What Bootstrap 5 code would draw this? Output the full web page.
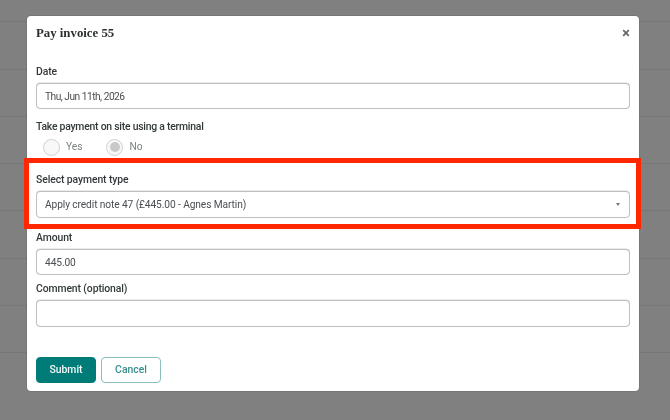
<!DOCTYPE html>
<html lang="en">
<head>
    <meta charset="UTF-8">
    <title>Pay invoice</title>
    <link href="https://cdn.jsdelivr.net/npm/bootstrap@5.3.3/dist/css/bootstrap.min.css" rel="stylesheet">
    <style>
        html, body { height: 100%; overflow: hidden; }
        body { background: #808080; font-family: Roboto, "Liberation Sans", sans-serif; font-size: 10.2px; color: #33393b; }
        .bg-rows { height: 420px; overflow: hidden; margin-top: -25px; }
        .bg-row { height: 47.3px; border-bottom: 1px solid #777; }

        .pay-modal { --bs-modal-width: 612px; width: 612px; max-width: 612px; margin: 16px 0 0 27px; }
        .pay-modal .modal-content { border: 0; border-radius: 4px; height: 375px; display: block; padding: 0 9px; color: #33393b; box-shadow: 0 0 0 1px rgba(0,0,0,.08); }
        .pay-modal .modal-header { border: 0; padding: 9px 0 0; height: 34px; align-items: flex-start; }
        .pay-modal .modal-title { font-family: "Liberation Serif", serif; font-size: 12.8px; font-weight: 700; line-height: 16px; color: #2b2f31; }
        .close-x { border: 0; background: none; padding: 0; width: 8px; height: 8px; margin: 4px 0 0 auto; line-height: 0; }

        .pay-modal .modal-body { padding: 0; }
        .form-label { font-size: 10.4px; font-weight: 500; letter-spacing: -.1px; line-height: 14px; margin-bottom: 4px; display: block; color: #33393b; }
        .form-control, .form-select { font-size: 10.2px; letter-spacing: -.1px; line-height: 14px; height: 26px; padding: 0 8px; border: 1px solid #bfbfbf; border-radius: 4px; color: #4a4f52; box-shadow: 0 -.5px 0 #d8d8d8; }
        #payDate { letter-spacing: -.5px; }
        .form-select { background-image: none; }
        textarea.form-control { height: 27px; min-height: 27px; resize: none; }
        .select-wrap { position: relative; }
        .caret { position: absolute; right: 10px; top: 12px; width: 0; height: 0; border-left: 2.5px solid transparent; border-right: 2.5px solid transparent; border-top: 3px solid #777; }

        .field-date { padding-top: 15px; }
        .field-terminal { padding-top: 11px; }
        .field-terminal .form-label { letter-spacing: -.23px; }
        .radio-row { padding-left: 7px; gap: 24px; height: 18px; }
        .radio-item { gap: 6px; color: #7d8183; }
        .radio { width: 17px; height: 17px; border-radius: 50%; border: 1.5px solid #d0d0d0; background: #f8f8f8; flex: none; display: flex; align-items: center; justify-content: center; }
        .radio.on::after { content: ""; width: 10px; height: 10px; border-radius: 50%; background: #c9c9c9; }
        .field-type { padding-top: 17px; }
        .field-type .form-select { height: 27px; }
        .field-amount { padding-top: 13px; }
        .field-comment { padding-top: 7px; }

        .pay-modal .modal-footer { border: 0; padding: 30px 0 0; justify-content: flex-start; gap: 5px; }
        .pay-modal .modal-footer > * { margin: 0; }
        .pay-btn { font-size: 10.4px; font-weight: 500; width: 60px; height: 26px; padding: 0; border-radius: 4px; line-height: 24px; }
        .btn-submit { background: #007c78; border: 1px solid #007c78; color: #f2f9f9; }
        .btn-cancel { background: #fff; border: 1px solid #8cbfbd; color: #378f8c; }

        .highlight { position: absolute; z-index: 1060; left: 24px; top: 158px; width: 617px; height: 71px; border: 5px solid #ff2600; pointer-events: none; }
    </style>
</head>
<body>
<div class="bg-rows">
    <div class="bg-row"></div>
    <div class="bg-row"></div>
    <div class="bg-row"></div>
    <div class="bg-row"></div>
    <div class="bg-row"></div>
    <div class="bg-row"></div>
    <div class="bg-row"></div>
    <div class="bg-row"></div>
    <div class="bg-row"></div>
    <div class="bg-row"></div>
</div>
<div class="modal d-block">
    <div class="modal-dialog pay-modal">
        <div class="modal-content">
            <div class="modal-header">
                <h5 class="modal-title">Pay invoice 55</h5>
                <button type="button" class="close-x" aria-label="Close">
                    <svg width="8" height="8" viewBox="0 0 8 8"><path d="M1.2 1.2 6.8 6.8M6.8 1.2 1.2 6.8" stroke="#666" stroke-width="1.7"/></svg>
                </button>
            </div>
            <form class="modal-body">
                <div class="field-date">
                    <label class="form-label" for="payDate">Date</label>
                    <input class="form-control" id="payDate" type="text" value="Thu, Jun 11th, 2026">
                </div>
                <div class="field-terminal">
                    <label class="form-label">Take payment on site using a terminal</label>
                    <div class="radio-row d-flex align-items-center">
                        <div class="radio-item d-flex align-items-center"><span class="radio"></span>Yes</div>
                        <div class="radio-item d-flex align-items-center"><span class="radio on"></span>No</div>
                    </div>
                </div>
                <div class="field-type">
                    <label class="form-label" for="payType">Select payment type</label>
                    <div class="select-wrap">
                        <select class="form-select" id="payType">
                            <option>Apply credit note 47 (£445.00 - Agnes Martin)</option>
                        </select>
                        <span class="caret"></span>
                    </div>
                </div>
                <div class="field-amount">
                    <label class="form-label" for="payAmount">Amount</label>
                    <input class="form-control" id="payAmount" type="text" value="445.00">
                </div>
                <div class="field-comment">
                    <label class="form-label" for="payComment">Comment (optional)</label>
                    <textarea class="form-control" id="payComment" rows="1"></textarea>
                </div>
                <div class="modal-footer">
                    <button type="button" class="btn pay-btn btn-submit">Submit</button>
                    <button type="button" class="btn pay-btn btn-cancel">Cancel</button>
                </div>
            </form>
        </div>
    </div>
</div>
<div class="highlight"></div>
<script src="https://cdn.jsdelivr.net/npm/bootstrap@5.3.3/dist/js/bootstrap.bundle.min.js"></script>
</body>
</html>
